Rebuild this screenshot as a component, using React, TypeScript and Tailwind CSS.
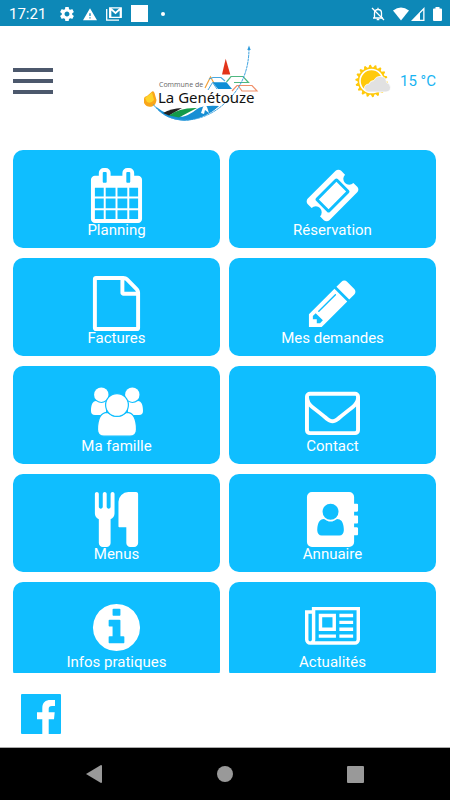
import type { ReactNode } from "react";

type Tile = {
  label: string;
  viewBox: string;
  icon: ReactNode;
};

const TILES: Tile[] = [
  {
    label: "Planning",
    viewBox: "0 0 1664 1792",
    icon: (
      <path d="M128 1664h288v-288h-288v288zm352 0h320v-288h-320v288zm-352-352h288v-320h-288v320zm352 0h320v-320h-320v320zm-352-384h288v-288h-288v288zm736 736h320v-288h-320v288zm-384-736h320v-288h-320v288zm768 736h288v-288h-288v288zm-384-352h320v-320h-320v320zm-352-864v-288q0-13-9.5-22.5t-22.5-9.5h-64q-13 0-22.5 9.5t-9.5 22.5v288q0 13 9.5 22.5t22.5 9.5h64q13 0 22.5-9.5t9.5-22.5zm736 864h288v-320h-288v320zm-384-384h320v-288h-320v288zm384 0h288v-288h-288v288zm32-480v-288q0-13-9.5-22.5t-22.5-9.5h-64q-13 0-22.5 9.5t-9.5 22.5v288q0 13 9.5 22.5t22.5 9.5h64q13 0 22.5-9.5t9.5-22.5zm384-64v1280q0 52-38 90t-90 38h-1408q-52 0-90-38t-38-90v-1280q0-52 38-90t90-38h128v-96q0-66 47-113t113-47h64q66 0 113 47t47 113v96h384v-96q0-66 47-113t113-47h64q66 0 113 47t47 113v96h128q52 0 90 38t38 90z" />
    ),
  },
  {
    label: "Réservation",
    viewBox: "0 0 1792 1792",
    icon: (
      <path d="M1024 452l316 316-572 572-316-316zm-211 979l618-618q19-19 19-45t-19-45l-362-362q-18-18-45-18t-45 18l-618 618q-19 19-19 45t19 45l362 362q18 18 45 18t45-18zm889-637l-907 908q-37 37-90.5 37t-90.5-37l-126-126q56-56 56-136t-56-136-136-56-136 56l-125-126q-37-37-37-90.5t37-90.5l907-906q37-37 90.5-37t90.5 37l125 125q-56 56-56 136t56 136 136 56 136-56l126 125q37 37 37 90.5t-37 90.5z" />
    ),
  },
  {
    label: "Factures",
    viewBox: "0 0 1536 1792",
    icon: (
      <path d="M1468 380q28 28 48 76t20 88v1152q0 40-28 68t-68 28h-1344q-40 0-68-28t-28-68v-1600q0-40 28-68t68-28h896q40 0 88 20t76 48zm-444-244v376h376q-10-29-22-41l-313-313q-12-12-41-22zm384 1528v-1024h-416q-40 0-68-28t-28-68v-416h-768v1536h1280z" />
    ),
  },
  {
    label: "Mes demandes",
    viewBox: "0 0 1792 1792",
    icon: (
      <path d="M491 1536l91-91-235-235-91 91v107h128v128h107zm523-928q0-22-22-22-10 0-17 7l-542 542q-7 7-7 17 0 22 22 22 10 0 17-7l542-542q7-7 7-17zm-54-192l416 416-832 832h-416v-416zm683 96q0 53-37 90l-166 166-416-416 166-165q36-38 90-38 53 0 91 38l235 234q37 39 37 91z" />
    ),
  },
  {
    label: "Ma famille",
    viewBox: "2 0 55 55",
    icon: (
      <>
        <circle cx="14.3" cy="10.7" r="7.2" />
        <circle cx="45.3" cy="10.7" r="7.2" />
        <path d="M4 27C4 21 5.500 17.200 9 17Q14.300 20.500 19 17.500V31H8Q4 31 4 27Z" />
        <path d="M56 27C56 21 54.500 17.200 51 17Q45.700 20.500 41 17.500V31H52Q56 31 56 27Z" />
        <g stroke="#0fbeff" strokeWidth="1.2">
          <path d="M10.500 45.500C10.500 34 14 28.300 20.500 28.300Q30 36.500 39.500 28.300C46 28.300 49.500 34 49.500 45.500Q49.500 52.200 43 52.200H17Q10.500 52.200 10.500 45.500Z" />
          <circle cx="30" cy="21" r="11.4" />
        </g>
      </>
    ),
  },
  {
    label: "Contact",
    viewBox: "0 0 1792 1792",
    icon: (
      <path d="M1664 1504v-768q-32 36-69 66-268 206-426 338-51 43-83 67t-86.500 48.500-102.500 24.500h-2q-48 0-102.500-24.500t-86.500-48.500-83-67q-158-132-426-338-37-30-69-66v768q0 13 9.500 22.500t22.500 9.500h1472q13 0 22.500-9.500t9.500-22.500zm0-1051v-24.500l-.5-13-3-12.500-5.500-9-9-7.500-14-2.500h-1472q-13 0-22.500 9.500t-9.500 22.500q0 168 147 284 193 152 401 317 6 5 35 29.500t46 37.500 44.500 31.500 50.500 27.500 43 9h2q20 0 43-9t50.500-27.500 44.500-31.500 46-37.500 35-29.500q208-165 401-317 54-43 100.500-115.500t46.500-131.500zm128-37v1088q0 66-47 113t-113 47h-1472q-66 0-113-47t-47-113v-1088q0-66 47-113t113-47h1472q66 0 113 47t47 113z" />
    ),
  },
  {
    label: "Menus",
    viewBox: "192 0 1408 1792",
    icon: (
      <path d="M832 64v640q0 61-35.500 111t-92.500 70v779q0 52-38 90t-90 38h-128q-52 0-90-38t-38-90v-779q-57-20-92.500-70t-35.500-111v-640q0-26 19-45t45-19 45 19 19 45v416q0 26 19 45t45 19 45-19 19-45v-416q0-26 19-45t45-19 45 19 19 45v416q0 26 19 45t45 19 45-19 19-45v-416q0-26 19-45t45-19 45 19 19 45zm768 0v1600q0 52-38 90t-90 38h-128q-52 0-90-38t-38-90v-512h-224q-13 0-22.500-9.500t-9.500-22.500v-800q0-132 94-226t226-94h256q26 0 45 19t19 45z" />
    ),
  },
  {
    label: "Annuaire",
    viewBox: "0 0 1664 1792",
    icon: (
      <path d="M1028 644q0 107-76.500 183t-183.500 76-183.500-76-76.500-183q0-108 76.500-184t183.500-76 183.500 76 76.500 184zM980 876q46 0 82.500 17t60 47.500 39.500 67 24 81 11.500 82.500 3.500 79q0 67-39.500 118.500t-105.500 51.500h-576q-66 0-105.500-51.500t-39.500-118.500q0-48 4.500-93.500t18.500-98.500 36.500-91.500 63-64.500 93.500-26h5q7 4 32 19.500t35.500 21 33 17 37 16 35 9 39.500 4.500 39.500-4.500 35-9 37-16 33-17 35.500-21 32-19.500zM1664 416v192q0 13-9.500 22.500t-22.500 9.500h-96v128h96q13 0 22.500 9.500t9.500 22.500v192q0 13-9.500 22.500t-22.500 9.500h-96v128h96q13 0 22.500 9.500t9.500 22.500v192q0 13-9.500 22.500t-22.500 9.500h-96v224q0 66-47 113t-113 47h-1216q-66 0-113-47t-47-113v-1472q0-66 47-113t113-47h1216q66 0 113 47t47 113v224h96q13 0 22.500 9.500t9.500 22.500z" />
    ),
  },
  {
    label: "Infos pratiques",
    viewBox: "0 0 1792 1792",
    icon: (
      <path d="M1152 1376v-160q0-14-9-23t-23-9h-96v-512q0-14-9-23t-23-9h-320q-14 0-23 9t-9 23v160q0 14 9 23t23 9h96v320h-96q-14 0-23 9t-9 23v160q0 14 9 23t23 9h448q14 0 23-9t9-23zm-128-896v-160q0-14-9-23t-23-9h-192q-14 0-23 9t-9 23v160q0 14 9 23t23 9h192q14 0 23-9t9-23zm640 416q0 209-103 385.500t-279.500 279.500-385.500 103-385.500-103-279.500-279.500-103-385.500 103-385.500 279.500-279.500 385.500-103 385.500 103 279.500 279.500 103 385.500z" />
    ),
  },
  {
    label: "Actualités",
    viewBox: "0 0 2048 1792",
    icon: (
      <path d="M1024 512h-384v384h384v-384zm128 640v128h-640v-128h640zm0-768v640h-640v-640h640zm640 768v128h-512v-128h512zm0-256v128h-512v-128h512zm0-256v128h-512v-128h512zm0-256v128h-512v-128h512zm-1536 960v-960h-128v960q0 26 19 45t45 19 45-19 19-45zm1664 0v-1088h-1536v1088q0 33-11 64h1483q26 0 45-19t19-45zm128-1216v1216q0 80-56 136t-136 56h-1664q-80 0-136-56t-56-136v-1088h256v-128h1792z" />
    ),
  },
];

// Outer outline of the sun: 18 short rays around the disc.
const SUN_POINTS = Array.from({ length: 72 }, (_, i) => {
  const radius = i % 4 < 2 ? 16.2 : 13.8;
  const angle = ((i + 0.5) / 72) * Math.PI * 2;
  return `${16.5 + radius * Math.cos(angle)},${17 + radius * Math.sin(angle)}`;
}).join(" ");

function StatusBar() {
  return (
    <div className="flex h-[26px] shrink-0 items-center justify-between bg-[#0d88b7] pt-px pr-2 pl-[9px] text-white">
      <div className="flex items-center gap-[9px]">
        <span className="w-[42px] text-[15px] leading-5">17:21</span>
        <svg className="size-[14px]" viewBox="2 2 20 20" fill="currentColor" aria-hidden="true">
          <path d="M19.430 12.980c.04-.32.07-.64.07-.98s-.03-.66-.07-.98l2.110-1.650c.19-.15.24-.42.12-.64l-2-3.460c-.12-.22-.39-.3-.61-.22l-2.490 1c-.52-.4-1.080-.73-1.690-.98l-.38-2.650C14.460 2.180 14.250 2 14 2h-4c-.25 0-.46.18-.49.42l-.38 2.650c-.61.25-1.170.59-1.690.98l-2.490-1c-.23-.09-.49 0-.61.22l-2 3.460c-.13.22-.07.49.12.64l2.110 1.650c-.04.32-.07.65-.07.98s.03.66.07.98l-2.110 1.650c-.19.15-.24.42-.12.64l2 3.460c.12.22.39.3.61.22l2.490-1c.52.4 1.080.73 1.690.98l.38 2.650c.03.24.24.42.49.42h4c.25 0 .46-.18.49-.42l.38-2.650c.61-.25 1.170-.59 1.690-.98l2.490 1c.23.09.49 0 .61-.22l2-3.460c.12-.22.07-.49-.12-.64l-2.110-1.650zM12 15.500c-1.930 0-3.500-1.570-3.500-3.500s1.570-3.500 3.500-3.500 3.500 1.570 3.500 3.500-1.570 3.500-3.500 3.500z" />
        </svg>
        <svg className="size-[14px]" viewBox="1 0 22 22" fill="currentColor" aria-hidden="true">
          <path d="M1 21h22L12 2 1 21zm12-3h-2v-2h2v2zm0-4h-2v-4h2v4z" />
        </svg>
        <svg className="size-4" viewBox="0 0 16 16" fill="none" stroke="currentColor" aria-hidden="true">
          <path d="M.7 3V14.200H13" strokeWidth="1.300" />
          <path d="M3.700 1.800H15.200V11.300H3.700Z" strokeWidth="1.300" />
          <path d="M4.500 2V11M14.500 2V11M4.500 2.500L9.500 7 14.500 2.500" strokeWidth="1.700" />
        </svg>
        <span className="size-[17px] bg-white" />
        <span className="ml-1 size-1 rounded-full bg-white" />
      </div>
      <div className="flex items-center gap-2">
        <svg className="size-[14px]" viewBox="0 0 14 14" fill="none" stroke="currentColor" aria-hidden="true">
          <path d="M3.500 10.500V6Q3.500 2.500 7 2.500T10.500 6V10.500M2 11H12M7 .8V2.500" strokeWidth="1.300" />
          <path d="M5.700 12.500H8.300" strokeWidth="1.500" />
          <path d="M1 1L13 13" strokeWidth="1.300" />
        </svg>
        <span className="flex items-center gap-[2px]">
          <svg className="h-[14px] w-4" viewBox="0 0 16 14" fill="currentColor" aria-hidden="true">
            <path d="M0 3.500Q8-2.500 16 3.500L8 13.500Z" />
          </svg>
          <svg className="size-[14px]" viewBox="0 0 14 14" fill="currentColor" aria-hidden="true">
            <path d="M13.500 0V14H0ZM12.200 3.200L9 6.500V12.700H12.200Z" fillRule="evenodd" />
          </svg>
        </span>
        <svg className="h-[14px] w-[9px]" viewBox="0 0 9 14" fill="currentColor" aria-hidden="true">
          <path d="M2.500 0H6.500V1.500H8Q9 1.500 9 2.500V13Q9 14 8 14H1Q0 14 0 13V2.500Q0 1.500 1 1.500H2.500Z" />
        </svg>
      </div>
    </div>
  );
}

function Logo() {
  return (
    <svg className="h-[94px] w-[130px]" viewBox="4 -2 130 94" role="img" aria-label="Commune de La Genétouze">
      {/* roofs and bell tower */}
      <path d="M90.700 22.700L87 38.500H95.300Z" fill="#e2341a" />
      <g fill="none" strokeWidth="1.200">
        <path d="M70 52L75.500 41L79.500 48" stroke="#f3a33c" />
        <path d="M74 43L78 41.500H86L90 45" stroke="#4aa8e0" />
        <path d="M91.500 46L96 40.500H108L113.500 46.500H99" stroke="#4fb780" />
        <path d="M97 55L102 49.500H117L122 55H107L103 49.500" stroke="#f0906a" />
      </g>
      <path d="M77.500 46.300H91.500L97 53H83Z" fill="#0f8fd6" />
      <path d="M73 54L77.500 46.500L82 53" fill="none" stroke="#4aa8e0" strokeWidth="1" />
      {/* flower */}
      <path d="M9 63Q9 60.500 12 60L16 56.500Q18.500 54 19.500 57L21.500 64Q21 69 17 70.500Q12 72 9 67Z" fill="#f9a61a" />
      <path d="M10 62L17 56.500L19 64Q16 68 12 66Z" fill="#fdd32a" />
      {/* fields and river */}
      <path d="M20 70Q30 84 49 84.700Q68 84 84 70Q70 74 60 79Q38 85 20 70Z" fill="#178fd4" />
      <path d="M28 77Q36 72.500 47 72L34 79.500Z" fill="#222" />
      <path d="M34 79.500Q44 71.500 62 72Q54 76 44 81.500Z" fill="#149a49" />
      <path d="M42 82.500Q54 80 62 73Q68 69 84 70Q73 81 53 84.300Z" fill="#178fd4" />
      <path d="M66 77L68 71L70 68.500L72 71L74 77L70 74L69 78Z" fill="#fff" />
      {/* arrow */}
      <path
        d="M114 12C114 36 105 54 90 67C68 88 34 91 18 68"
        fill="none"
        stroke="#2e9bdc"
        strokeWidth="0.900"
        strokeDasharray="3 0.500"
      />
      <path d="M112.300 14L114 9.500L115.700 14Z" fill="#2e9bdc" />
      <text x="24" y="51" fontSize="7" fill="#666" className="font-['Open_Sans',sans-serif]">
        Commune de
      </text>
      <text x="23" y="67" fontSize="15" fill="#111" className="font-['Noto_Sans',sans-serif]">
        La Genétouze
      </text>
    </svg>
  );
}

function Weather() {
  return (
    <div className="flex items-center gap-[9px] text-[#18b4f2]">
      <svg className="h-[34px] w-9" viewBox="0 0 36 34" aria-hidden="true">
        <polygon points={SUN_POINTS} fill="#ffc90a" />
        <circle cx="16.500" cy="17" r="11.500" fill="#ffc90a" stroke="#fff" strokeWidth="1.600" />
        <path
          d="M13 28Q9.500 27.500 9.500 24T14 20Q15 16.500 19 16.500Q21 12 26 12.500Q31.500 13 31.500 18.500Q35.500 19.500 35.500 23.500T31 28Z"
          fill="#e1e1e1"
          stroke="#fff"
          strokeWidth="0.800"
        />
      </svg>
      <span className="text-[15px] leading-5 whitespace-nowrap">15 °C</span>
    </div>
  );
}

export default function App() {
  return (
    <div className="flex h-screen flex-col bg-white font-[Roboto,sans-serif]">
      <StatusBar />

      <header className="flex h-[110px] shrink-0 items-center justify-between pr-[14px] pl-[13px]">
        <button type="button" aria-label="Menu" className="flex w-10 flex-col gap-[7px]">
          <span className="h-1 bg-[#4c586c]" />
          <span className="h-1 bg-[#4c586c]" />
          <span className="h-1 bg-[#4c586c]" />
        </button>
        <Logo />
        <Weather />
      </header>

      <main className="min-h-0 flex-1 overflow-y-auto pt-[14px] pr-[14px] pl-[13px] [scrollbar-width:none]">
        <div className="grid grid-cols-2 gap-x-[9px] gap-y-[10px]">
          {TILES.map((tile) => (
            <button
              key={tile.label}
              type="button"
              className="flex flex-col items-center rounded-[10px] bg-[#0fbeff] pt-[18px] pb-[11px] text-white"
            >
              <svg className="size-[55px]" viewBox={tile.viewBox} fill="currentColor" fillRule="evenodd" aria-hidden="true">
                {tile.icon}
              </svg>
              <span className="text-[15px] leading-[14px]">{tile.label}</span>
            </button>
          ))}
        </div>
      </main>

      <footer className="shrink-0 px-[21px] pt-[21px] pb-[13px]">
        <a href="#facebook" aria-label="Facebook" className="block size-10 rounded-[1px] bg-[#0fbeff]">
          <svg className="size-10" viewBox="0 0 40 40" fill="#fff" aria-hidden="true">
            <path d="M21.300 40V25.300H16V18.300H21.300V14C21.300 8.500 24.500 6 29.500 6H34V12H31C28.500 12 27.700 13 27.700 15V18.300H33.700L33 25.300H27.700V40Z" />
          </svg>
        </a>
      </footer>

      <nav className="flex h-[53px] shrink-0 items-center justify-between border-t border-[#aaa] bg-black px-[86px] text-[#999]">
        <button type="button" aria-label="Retour">
          <svg className="h-[18px] w-4" viewBox="0 0 16 18" fill="currentColor">
            <path d="M0 9L15 0Q16 0 16 1V17Q16 18 15 18Z" />
          </svg>
        </button>
        <button type="button" aria-label="Accueil" className="size-4 rounded-full bg-[#999]" />
        <button type="button" aria-label="Applications récentes" className="size-[17px] rounded-[1px] bg-[#999]" />
      </nav>
    </div>
  );
}
